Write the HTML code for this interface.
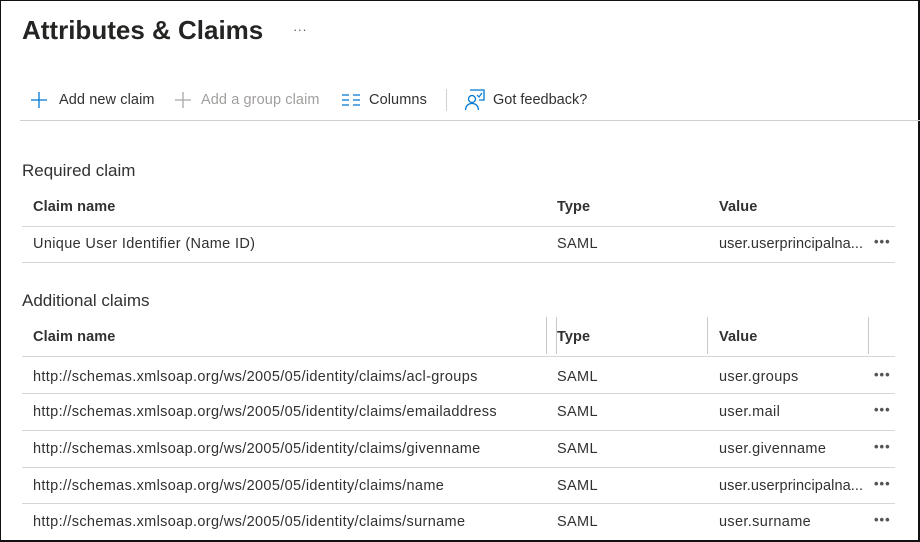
<!DOCTYPE html>
<html><head><meta charset="utf-8"><style>
*{margin:0;padding:0;box-sizing:border-box}
body{width:920px;height:542px;background:#fff;font-family:"Liberation Sans",sans-serif;color:#323130;position:relative;overflow:hidden}
.frame{position:absolute;left:0;top:0;width:920px;height:542px;border:1.5px solid #111;border-right:2px solid #111;border-bottom:2px solid #111}
.a{position:absolute;white-space:nowrap;font-size:14.5px;letter-spacing:0.35px}
.h{font-weight:bold;color:#323130;letter-spacing:0.1px}
.line{position:absolute;left:22px;width:873px;height:1px;background:#d6d6d6}
.v{position:absolute;width:1px;background:#c8c8c8;top:317px;height:37px}
.dots{position:absolute;left:874px;font-size:13px;letter-spacing:1px;color:#555;font-weight:bold}
</style></head><body>
<div class="frame"></div>
<div class="a" style="left:22px;top:15px;font-size:26px;font-weight:bold;letter-spacing:0;color:#252423">Attributes &amp; Claims</div>
<div class="a" style="left:293px;top:22px;font-size:13px;color:#555">···</div>

<svg style="position:absolute;left:30px;top:91px" width="18" height="18"><path d="M9 1V17M1 9H17" stroke="#0078d4" stroke-width="1.3"/></svg>
<div class="a" style="left:59px;top:92px;letter-spacing:0.1px">Add new claim</div>
<svg style="position:absolute;left:174px;top:91px" width="18" height="18"><path d="M9 1V17M1 9H17" stroke="#a8a8a8" stroke-width="1.3"/></svg>
<div class="a" style="left:201px;top:92px;color:#a19f9d;letter-spacing:0.1px">Add a group claim</div>
<svg style="position:absolute;left:342px;top:93px" width="18" height="14"><path d="M0 2H7M0 7H7M0 12H7M11 2H18M11 7H18M11 12H18" stroke="#0078d4" stroke-width="1.3"/></svg>
<div class="a" style="left:369px;top:92px;letter-spacing:0.1px">Columns</div>
<div style="position:absolute;left:446px;top:89px;width:1px;height:22px;background:#d0d0d0"></div>
<svg style="position:absolute;left:464px;top:89px" width="22" height="22"><path d="M6 1H20V11H15" fill="none" stroke="#0078d4" stroke-width="1.3"/><circle cx="8" cy="10" r="3.5" fill="none" stroke="#0078d4" stroke-width="1.3"/><path d="M1.5 21C2 16 5 14.5 8 14.5S14 16 14.5 21" fill="none" stroke="#0078d4" stroke-width="1.3"/><path d="M13 6L15 8L18 4" fill="none" stroke="#0078d4" stroke-width="1.2"/></svg>
<div class="a" style="left:493px;top:92px;letter-spacing:0">Got feedback?</div>
<div style="position:absolute;left:20px;top:120px;width:900px;height:1px;background:#d0d0d0"></div>

<div class="a" style="left:22px;top:161px;font-size:17px;letter-spacing:0">Required claim</div>
<div class="a h" style="left:33px;top:199px">Claim name</div>
<div class="a h" style="left:557px;top:199px">Type</div>
<div class="a h" style="left:719px;top:199px">Value</div>
<div class="line" style="top:226px"></div>
<div class="a" style="left:33px;top:236px">Unique User Identifier (Name ID)</div>
<div class="a" style="left:557px;top:236px">SAML</div>
<div class="a" style="left:719px;top:236px;letter-spacing:0.1px">user.userprincipalna...</div>
<div class="dots" style="top:234px">•••</div>
<div class="line" style="top:262px"></div>

<div class="a" style="left:22px;top:291px;font-size:17px;letter-spacing:0">Additional claims</div>
<div class="v" style="left:546px"></div><div class="v" style="left:556px"></div><div class="v" style="left:707px"></div><div class="v" style="left:868px"></div>
<div class="a h" style="left:33px;top:329px">Claim name</div>
<div class="a h" style="left:557px;top:329px">Type</div>
<div class="a h" style="left:719px;top:329px">Value</div>
<div class="line" style="top:356px"></div>

<div class="a" style="left:33px;top:369px">http://schemas.xmlsoap.org/ws/2005/05/identity/claims/acl-groups</div>
<div class="a" style="left:557px;top:369px">SAML</div><div class="a" style="left:719px;top:369px">user.groups</div><div class="dots" style="top:367px">•••</div>
<div class="line" style="top:393px"></div>
<div class="a" style="left:33px;top:404px">http://schemas.xmlsoap.org/ws/2005/05/identity/claims/emailaddress</div>
<div class="a" style="left:557px;top:404px">SAML</div><div class="a" style="left:719px;top:404px">user.mail</div><div class="dots" style="top:402px">•••</div>
<div class="line" style="top:430px"></div>
<div class="a" style="left:33px;top:441px">http://schemas.xmlsoap.org/ws/2005/05/identity/claims/givenname</div>
<div class="a" style="left:557px;top:441px">SAML</div><div class="a" style="left:719px;top:441px">user.givenname</div><div class="dots" style="top:439px">•••</div>
<div class="line" style="top:467px"></div>
<div class="a" style="left:33px;top:478px">http://schemas.xmlsoap.org/ws/2005/05/identity/claims/name</div>
<div class="a" style="left:557px;top:478px">SAML</div><div class="a" style="left:719px;top:478px;letter-spacing:0.1px">user.userprincipalna...</div><div class="dots" style="top:476px">•••</div>
<div class="line" style="top:503px"></div>
<div class="a" style="left:33px;top:514px">http://schemas.xmlsoap.org/ws/2005/05/identity/claims/surname</div>
<div class="a" style="left:557px;top:514px">SAML</div><div class="a" style="left:719px;top:514px">user.surname</div><div class="dots" style="top:512px">•••</div>
</body></html>
